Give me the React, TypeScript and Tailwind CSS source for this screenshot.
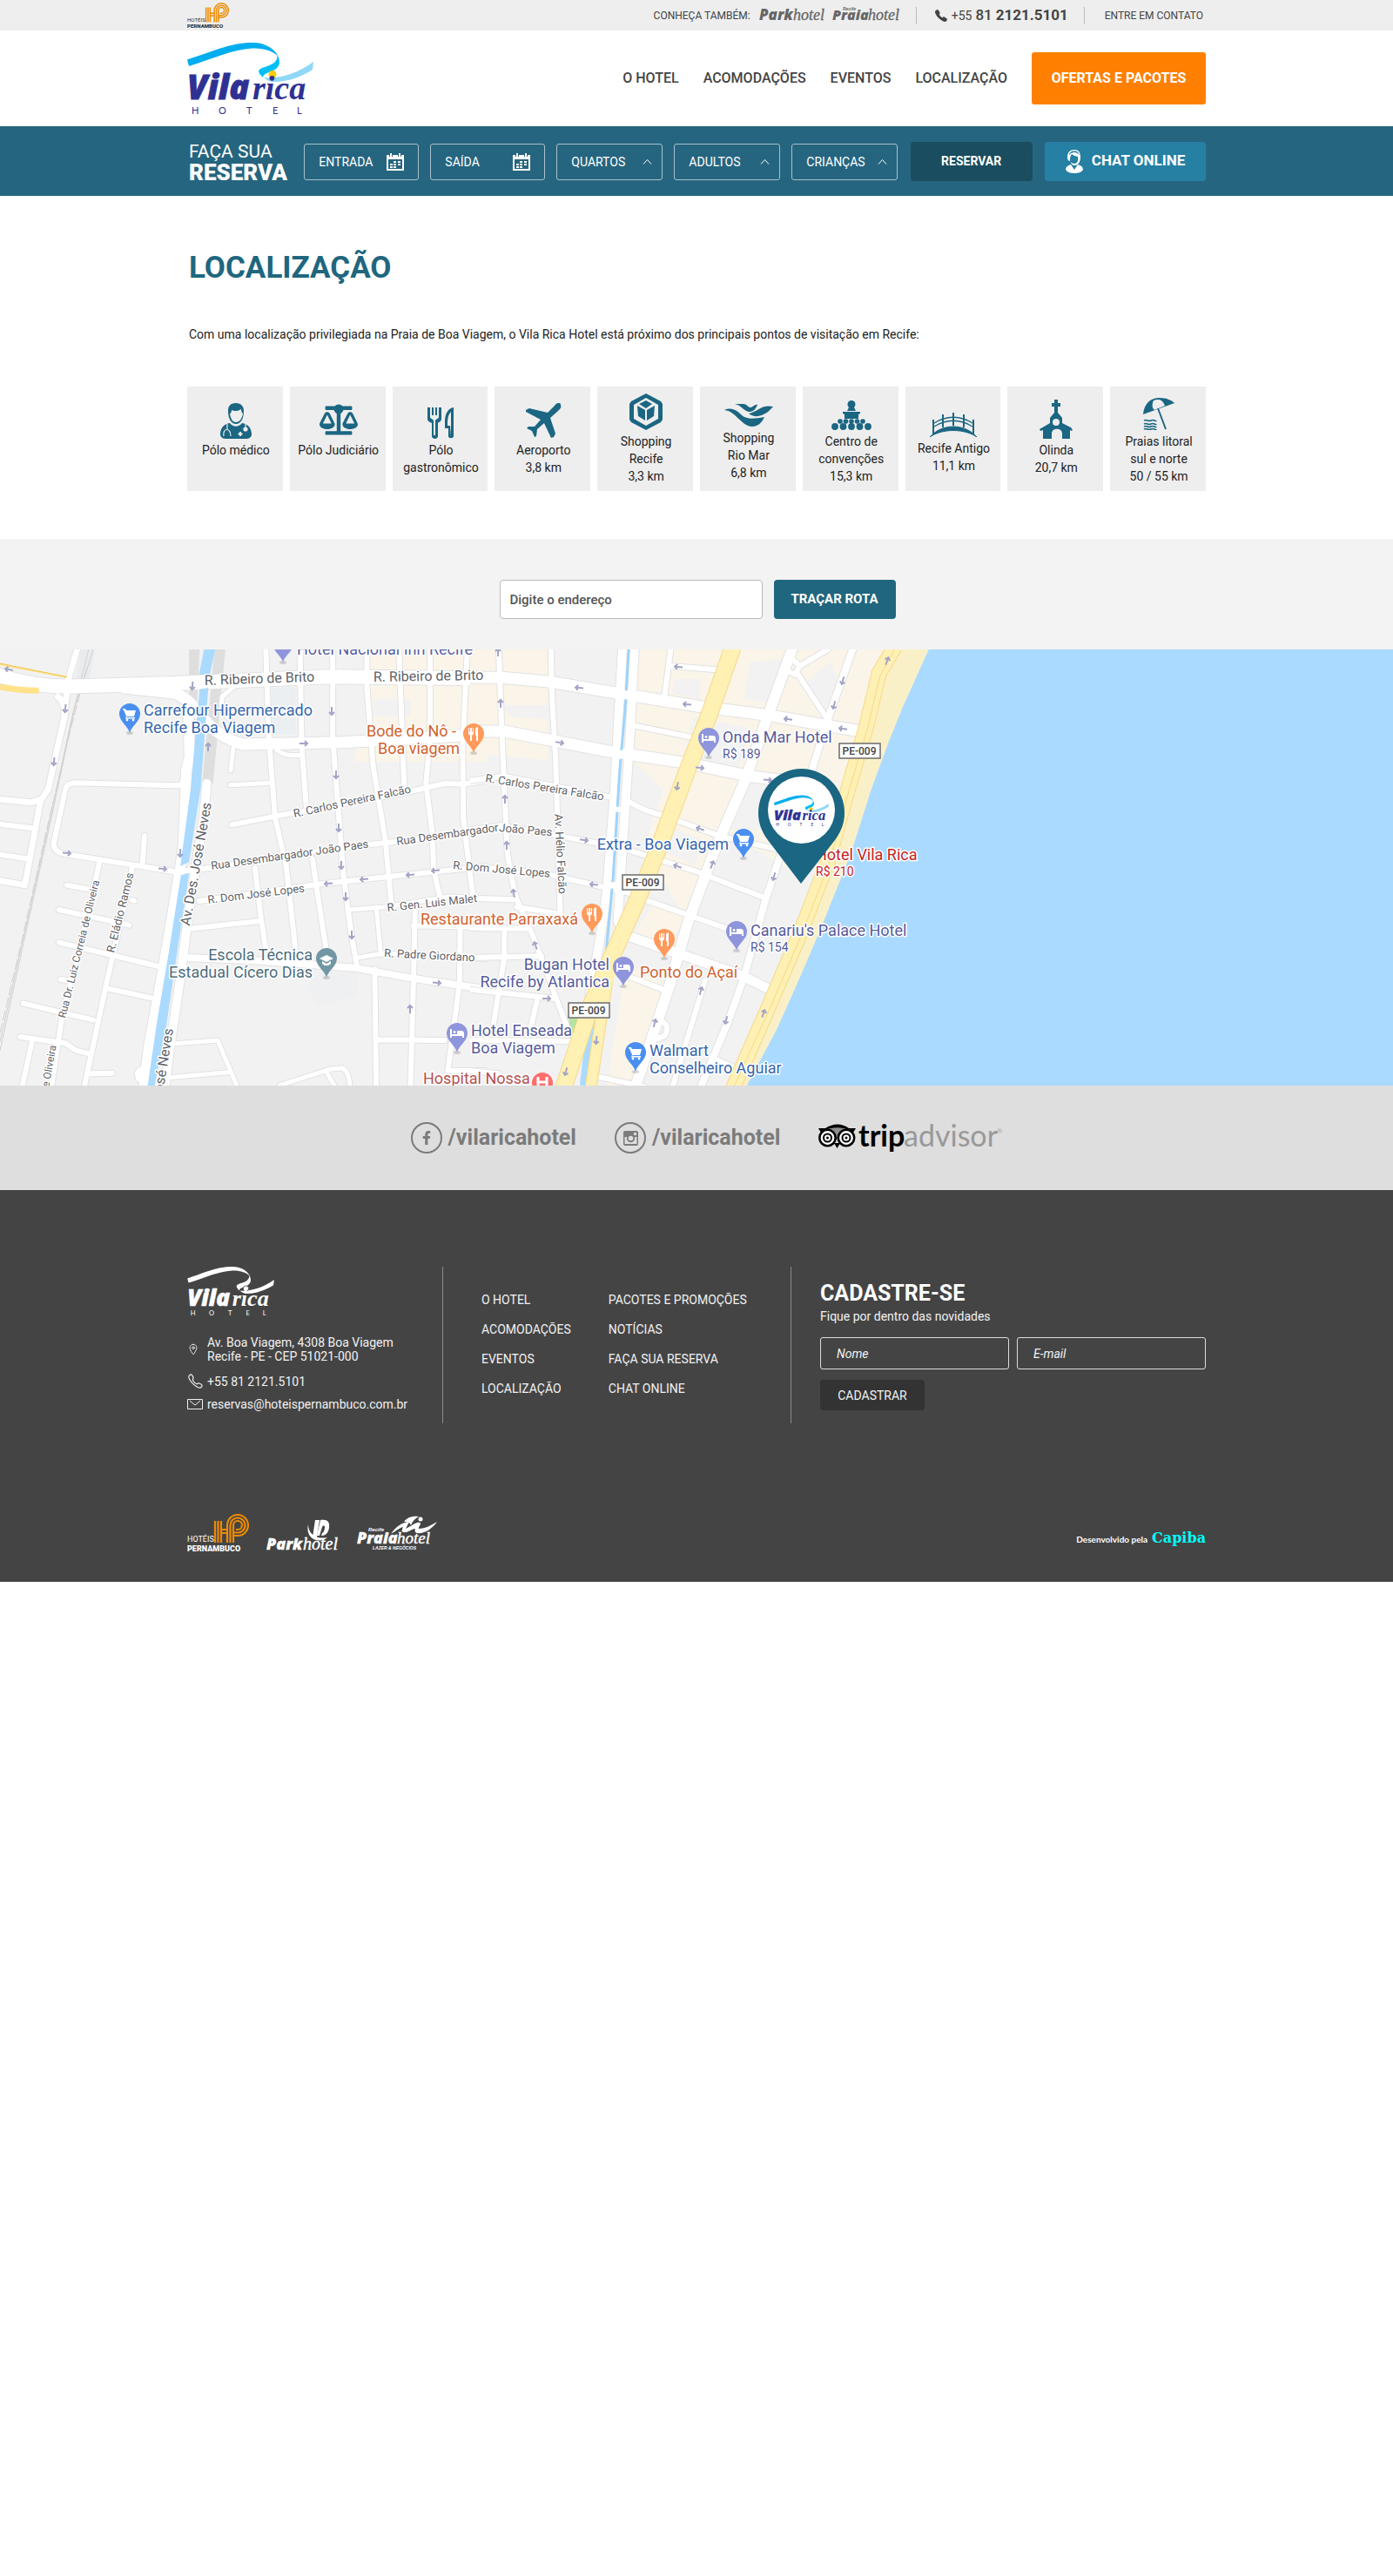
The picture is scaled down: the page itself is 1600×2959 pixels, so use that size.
import React from "react";
import { FaBalanceScale, FaFacebookF } from "react-icons/fa";
import { IoCall, IoCallOutline, IoLocationOutline } from "react-icons/io5";

const HEAVY = "Open Sans, Liberation Sans, sans-serif";
const SANS = "Liberation Sans, Arial, sans-serif";
const SERIF = "Liberation Serif, Times New Roman, serif";
const BRAND = "#1b6682";

/* ---------- Logos ---------- */

type VilaProps = {
  width: number;
  height: number;
  x?: number;
  y?: number;
  white?: boolean;
};

function VilaRicaLogo({ width, height, x, y, white }: VilaProps) {
  const ink = white ? "#fff" : "#2e3192";
  return (
    <svg x={x} y={y} width={width} height={height} viewBox="0 0 145 83" role="img" aria-label="Vila Rica Hotel">
      <path d="M0 19.500C28 11 48 0 75 0c16 0 26 8 29 15-6-5-15-9-29-8.500C51 8 28 19 2 27Z" fill={white ? "#fff" : "#00aeef"} />
      <path d="M103 13c5 9 4 15-4 19-7 3-12 4-12 8-4-4-6-7-4-9 3-3 12-4 17-8 3-3 4-6 3-10Z" fill={white ? "#fff" : "#00c0f7"} />
      <path d="M88 40c16 2 38-4 57-18l-1 9c-14 9-30 14-43 14-6 0-10-2-13-5Z" fill={white ? "#fff" : "#8fd8f8"} />
      <circle cx="98" cy="36.500" r="4.500" fill={white ? "#fff" : "#ffcb05"} stroke={white ? "#444" : "none"} />
      <text x="0" y="65" fontFamily={HEAVY} fontWeight="800" fontStyle="italic" fontSize="38" fill={ink} stroke={ink} strokeWidth="0.800">
        Vila
      </text>
      <text x="75" y="65" fontFamily={SERIF} fontWeight="700" fontStyle="italic" fontSize="38" fill={ink}>
        rica
      </text>
      {["H", "O", "T", "E", "L"].map((c, i) => (
        <text key={c} x={[5, 36, 68, 98, 126][i]} y="82" fontFamily="Lato, sans-serif" fontSize="11" fill={ink}>
          {c}
        </text>
      ))}
    </svg>
  );
}

function PernambucoLogo({ width, height, ink }: { width: number; height: number; ink: string }) {
  return (
    <svg width={width} height={height} viewBox="0 0 71 44" role="img" aria-label="Hotéis Pernambuco">
      <g fill="none" stroke="#ee8a00" strokeWidth="2.200">
        <path d="M32 8v25M35.500 8v25M39 8v25M39 18h7M39 22h7" />
        <path d="M46 33V13a12 12 0 1 1 12 12h-5M49.500 33V13a8.500 8.500 0 1 1 8.500 8.500h-4M53 33V13a5 5 0 1 1 5 5h-2" />
      </g>
      <text x="0" y="32" fontFamily="Roboto, sans-serif" fontSize="9" fill={ink}>HOTÉIS</text>
      <text x="0" y="43" fontFamily="Roboto, sans-serif" fontWeight="900" fontSize="9" fill={ink}>PERNAMBUCO</text>
    </svg>
  );
}

function ParkHotelSmall() {
  return (
    <svg width="76" height="20" viewBox="0 0 76 20" role="img" aria-label="Park Hotel">
      <text x="0" y="15" fontFamily={HEAVY} fontWeight="800" fontStyle="italic" fontSize="17" fill="#666">Park</text>
      <text x="39" y="15" fontFamily={SERIF} fontStyle="italic" fontSize="18" fill="#666" stroke="#666" strokeWidth="0.300">hotel</text>
    </svg>
  );
}

function PraiaHotelSmall() {
  return (
    <svg width="78" height="20" viewBox="0 0 78 20" role="img" aria-label="Recife Praia Hotel">
      <text x="0" y="15" fontFamily={HEAVY} fontWeight="800" fontStyle="italic" fontSize="16" fill="#666">Praia</text>
      <text x="41" y="15" fontFamily={SERIF} fontStyle="italic" fontSize="18" fill="#666" stroke="#666" strokeWidth="0.300">hotel</text>
      <text x="12" y="4" fontFamily={SANS} fontWeight="700" fontStyle="italic" fontSize="5" fill="#666">Recife</text>
    </svg>
  );
}

function ParkHotelLogo() {
  return (
    <svg width="84" height="40" viewBox="0 0 84 40" role="img" aria-label="Park Hotel" fill="#fff">
      <path d="M56 3h5l-3 20h-5Z" />
      <path d="M62 3c8-1 11 2 10 9-1 6-4 9-9 9l1-3c2-1 3-4 3-7 0-2-2-2-3 0l-3 10h-3Z" />
      <path d="M48 8c-2 8 1 16 9 18 5 1 10 0 13-3-5 1-11 1-15-2-5-3-7-8-7-13Z" />
      <text x="0" y="37" fontFamily={HEAVY} fontWeight="800" fontStyle="italic" fontSize="18" stroke="#fff" strokeWidth="0.300">Park</text>
      <text x="42" y="37" fontFamily={SERIF} fontStyle="italic" fontSize="20" stroke="#fff" strokeWidth="0.400">hotel</text>
    </svg>
  );
}

function PraiaHotelLogo() {
  return (
    <svg width="94" height="42" viewBox="0 0 94 42" role="img" aria-label="Recife Praia Hotel Lazer e Negócios" fill="#fff">
      <path d="M39 21C46 11 52 8 60 7l-4 8c7-3 12-8 16-7 3 1-2 5-1 7 6 0 13-3 21-8-7 10-16 14-23 13-4-1-1-5-3-5-4 1-8 5-13 4-3-1 0-5 0-6-4 1-9 5-14 8Z" />
      <path d="M54 7c4-5 9-7 17-6-4 2-7 5-9 10-1-3-4-4-8-4Z" />
      <circle cx="73" cy="4" r="2.500" />
      <text x="0" y="32" fontFamily={HEAVY} fontWeight="800" fontStyle="italic" fontSize="18" stroke="#fff" strokeWidth="0.300">Praia</text>
      <text x="46" y="32" fontFamily={SERIF} fontStyle="italic" fontSize="19" stroke="#fff" strokeWidth="0.400">hotel</text>
      <text x="13" y="18" fontFamily={SANS} fontWeight="700" fontStyle="italic" fontSize="6">Recife</text>
      <text x="18" y="39" fontFamily={SANS} fontWeight="700" fontStyle="italic" fontSize="5">LAZER &amp; NEGÓCIOS</text>
    </svg>
  );
}

function TripAdvisorLogo() {
  return (
    <svg width="212" height="40" viewBox="0 0 212 40" role="img" aria-label="TripAdvisor">
      <path d="M7 7c10-6 20-6 29 0l-7 4-7 8-7-8Z" fill="#8e8e8e" />
      <path d="M0 5h8c9-6 19-6 27 0h8l-3 5-3-2C28 3 15 3 6 8l-3 2Z" fill="#000" />
      <circle cx="10.500" cy="16" r="9.200" fill="#fff" stroke="#000" strokeWidth="2.600" />
      <circle cx="32" cy="16" r="9.200" fill="#fff" stroke="#000" strokeWidth="2.600" />
      <g fill="#fff" stroke="#000" strokeWidth="2">
        <circle cx="10.500" cy="16" r="4.500" />
        <circle cx="32" cy="16" r="4.500" />
      </g>
      <circle cx="10.500" cy="16" r="1.500" fill="#000" />
      <circle cx="32" cy="16" r="1.500" fill="#000" />
      <path d="M18 22h7l-3.500 6Z" fill="#000" />
      <text x="46" y="26" fontFamily="Lato, sans-serif" fontWeight="700" fontSize="34" fill="#000">trip</text>
      <text x="98" y="26" fontFamily="Lato, sans-serif" fontSize="34" fill="#999">advisor</text>
      <text x="205" y="11" fontFamily="Lato, sans-serif" fontSize="8" fill="#aaa">®</text>
    </svg>
  );
}

/* ---------- Small icons ---------- */

function CalendarIcon() {
  return (
    <svg width="20" height="20" viewBox="0 0 20 20" className="shrink-0" aria-hidden="true">
      <path d="M0 2h20v18H0ZM2 7v11h16V7Z" fill="#fff" fillRule="evenodd" />
      <path d="M5 0v4M15 0v4" stroke="#26657f" strokeWidth="4" />
      <path d="M5 0v4M15 0v4" stroke="#fff" strokeWidth="2" />
      <path d="M8 9h3v2H8ZM13 9h3v2h-3ZM4 12h3v2H4ZM8 12h3v2H8ZM13 12h3v2h-3ZM4 15h3v2H4ZM8 15h3v2H8Z" fill="#fff" />
    </svg>
  );
}

function Caret() {
  return (
    <svg width="11" height="7" viewBox="0 0 11 7" aria-hidden="true" className="pointer-events-none absolute right-3 top-1/2 -translate-y-1/2">
      <path d="M1 6l4.500-5L10 6" fill="none" stroke="#fff" strokeWidth="1" />
    </svg>
  );
}

function AgentIcon() {
  return (
    <svg width="20" height="27" viewBox="0 0 20 27" fill="#fff" aria-hidden="true">
      <path d="M10 0C4 0 2 4 2 9c0 3 2 4 3 4 0-3 0-6 2-8 2 2 5 2 7 3 1 5-1 8-4 8-2 0-3-1-4-2 0 2 2 4 4 4 5 0 7-5 7-9 0-6-2-9-7-9Zm0 1.500c4 0 5 2 6 5-2-4-9-5-12 0 0-3 2-5 6-5Z" fillRule="evenodd" />
      <path d="M6 17l4 6 4-6c4 1 6 3 6 6-2 3-6 4-10 4s-8-1-10-4c0-3 2-5 6-6Z" />
    </svg>
  );
}

function InstagramIcon() {
  return (
    <svg width="17" height="17" viewBox="0 0 17 17" aria-hidden="true">
      <path d="M2 0h13a2 2 0 0 1 2 2v13a2 2 0 0 1-2 2H2a2 2 0 0 1-2-2V2a2 2 0 0 1 2-2ZM1.500 7v8h14V7h-2.600a4.700 4.700 0 1 1-8.800 0ZM12 2v3h3V2Z" fill="#7b7b7b" fillRule="evenodd" />
      <circle cx="8.500" cy="8.500" r="2.800" fill="#dedede" />
    </svg>
  );
}

/* ---------- Attractions ---------- */

const DoctorIcon = (
  <svg width="36" height="41" viewBox="0 0 36 41" fill={BRAND} aria-hidden="true">
    <path d="M18 0c-7 0-9 4-9 9 0 8 3 15 9 15s9-7 9-15c0-5-3-9-9-9Zm-7 12c1 0 2-2 2-4 4 2 8 1 11-1 0 3 1 4 2 5-1 6-4 10-8 10s-6-4-7-10Z" fillRule="evenodd" />
    <path d="M11 23c4 5 10 5 14 0 7 1 11 6 11 13 0 3-3 5-6 5H6c-3 0-6-2-6-5 0-7 4-12 11-13Z" />
    <g fill="none" stroke="#eee" strokeWidth="1.200">
      <path d="M8 24v6M4 38c-2-9 8-11 8 0" />
      <path d="M29 24v4" />
    </g>
    <circle cx="29" cy="30" r="2.600" fill="#eee" />
    <path d="M23 33v5M20.500 35.500h5" stroke="#eee" strokeWidth="2" />
  </svg>
);

const CutleryIcon = (
  <svg width="30" height="36" viewBox="0 0 30 36" fill={BRAND} aria-hidden="true">
    <path d="M0 0h3v11c0 2 3 2 4 4v17h2V15c1-2 4-2 4-4V0h3v13c0 3-3 4-4 5v15c0 4-7 4-7 0V18c-2-1-5-2-5-5Z" />
    <path d="M5 0h2v9H5ZM9 0h2v9H9Z" />
    <path d="M30 0v33c0 3-6 3-6 0v-9h-4V14c1-8 4-13 10-14Zm-3 5c-3 3-4 7-4 16h3l1 12Z" fillRule="evenodd" />
  </svg>
);

const PlaneIcon = (
  <svg width="42" height="41" viewBox="0 0 42 41" fill={BRAND} aria-hidden="true">
    <path d="M41 1c-2-2-5-1-7 2l-8 8L5 6 1 8v2l17 9-7 8H4l-2 2 6 3 3 7 2-1 1-8 8-7 8 17 3-1 2-4-6-18 9-8c3-3 4-4 3-6Z" />
  </svg>
);

const CubeIcon = (
  <svg width="38" height="42" viewBox="0 0 38 42" fill={BRAND} aria-hidden="true">
    <path d="M19 0l17 9 2 3v18l-2 3-17 9-17-9-2-3V12l2-3Zm0 5L5 13v16l14 8 14-8V13Z" fillRule="evenodd" />
    <path d="M19 8l7 4-7 5-8-5ZM9 14l9 5v12l-8-5ZM29 14l-9 5v12l8-5Z" />
  </svg>
);

const GullIcon = (
  <svg width="56" height="26" viewBox="0 0 56 26" fill={BRAND} aria-hidden="true">
    <path d="M0 7c9-4 15 1 20 6 6 5 14 4 26 2-3 7-8 11-14 11C20 26 13 8 0 7Z" />
    <path d="M12 0h10c4 0 5 4 8 4 3 0 5-4 8-3-2 5-5 8-9 8-6 0-10-8-17-9Z" />
    <path d="M56 3C43 0 38 9 28 11c5 4 11 4 17 1 5-2 8-6 11-9Z" />
  </svg>
);

const CrowdIcon = (
  <svg width="46" height="34" viewBox="0 0 46 34" fill={BRAND} aria-hidden="true">
    <circle cx="23" cy="4.500" r="4.500" />
    <path d="M18 12l2-4h6l2 4ZM13 13h20v2l-2 1v5H15v-5l-2-1Z" />
    {[10, 16.5, 23, 29.5, 36].map((x) => (
      <circle key={x} cx={x} cy="24" r="2.800" />
    ))}
    {[4, 13.5, 23, 32.5, 42].map((x) => (
      <ellipse key={x} cx={x} cy="30" rx="3.900" ry="4" />
    ))}
  </svg>
);

const BridgeIcon = (
  <svg width="54" height="28" viewBox="0 0 54 28" fill={BRAND} aria-hidden="true">
    <path d="M0 28c14-16 40-16 54 0C40 18 14 18 0 28Z" stroke={BRAND} strokeWidth="1" />
    <g fill="none" stroke={BRAND}>
      <path d="M4 8v17M15 2v15M27 0v15M39 2v15M50 8v17" strokeWidth="2" />
      <path d="M5 12c14-9 30-9 44 0M5 16c14-9 30-9 44 0" strokeWidth="1.300" />
    </g>
  </svg>
);

const ChurchIcon = (
  <svg width="38" height="45" viewBox="0 0 38 45" fill={BRAND} aria-hidden="true">
    <path d="M17 0h4v4h3v4h-3v7l5 6v6l10 5 2 3-1 1-2-1v10h-9v-6c0-7-12-7-12 0v6H4V35l-3 1-1-2 12-7v-6l5-6V8h-3V4h3Zm2 22a4 4 0 1 0 0 8 4 4 0 0 0 0-8Z" fillRule="evenodd" />
  </svg>
);

const UmbrellaIcon = (
  <svg width="38" height="37" viewBox="0 0 38 37" aria-hidden="true">
    <path d="M1 19C2 7 9 0 20 0c8 0 14 3 17 6L1 19Z" fill={BRAND} />
    <path d="M13 3c5-2 10-2 13 6l-12 5c-3-2-3-7-1-11Z" fill="#eee" />
    <path d="M18 12l9 24" stroke={BRAND} strokeWidth="2" />
    <path d="M2 26q2-1 4 0t4 0 4 0 2 0M2 30q2-1 4 0t4 0 4 0 2 0M2 33q2-1 4 0t4 0 4 0 2 0M2 36q2-1 4 0t4 0 4 0 2 0" fill="none" stroke={BRAND} strokeWidth="1.600" />
  </svg>
);

type Attraction = { lines: string[]; icon: React.ReactNode; box: string };

const ATTRACTIONS: Attraction[] = [
  { lines: ["Pólo médico"], icon: DoctorIcon, box: "h-[63px]" },
  { lines: ["Pólo Judiciário"], icon: <FaBalanceScale size={44} color={BRAND} aria-hidden="true" />, box: "h-[63px]" },
  { lines: ["Pólo", "gastronômico"], icon: CutleryIcon, box: "h-[63px]" },
  { lines: ["Aeroporto", "3,8 km"], icon: PlaneIcon, box: "h-[63px]" },
  { lines: ["Shopping", "Recife", "3,3 km"], icon: CubeIcon, box: "h-[53px]" },
  { lines: ["Shopping", "Rio Mar", "6,8 km"], icon: GullIcon, box: "h-[49px]" },
  { lines: ["Centro de", "convenções", "15,3 km"], icon: CrowdIcon, box: "h-[53px]" },
  { lines: ["Recife Antigo", "11,1 km"], icon: BridgeIcon, box: "h-[61px]" },
  { lines: ["Olinda", "20,7 km"], icon: ChurchIcon, box: "h-[63px]" },
  { lines: ["Praias litoral", "sul e norte", "50 / 55 km"], icon: UmbrellaIcon, box: "h-[53px]" },
];

/* ---------- Map ---------- */

type Road = [string, number];

const WEST_ROADS: Road[] = [
  ["M248 18L220 120 205 260 155 500 130 540 80 830 0 815M0 535L100 545 130 535M185 180Q212 200 208 250", 7],
  ["M0 620L115 635M0 725L95 740", 6],
  ["M600 450L580 487 560 487 240 478Q215 480 210 500L172 690Q175 715 205 722L570 785", 6],
  ["M605 200L610 390 600 430 590 700 560 900 520 1150 480 1380 462 1530", 12],
  ["M665 480L655 600 610 900 580 1150 545 1400 530 1530", 10],
  ["M560 785L680 770 1100 700 1240 685 1568 640", 6],
  ["M640 885L1040 825 1568 765M745 622L900 590 1310 510 1430 480 1490 482 1568 468", 6],
  ["M610 980L830 955M215 830L300 848M190 915L415 968M190 1028L510 1110M195 1155L215 1158M425 882L432 884M340 1185L490 1220M75 1238L300 1295M65 1353L210 1375 245 1400 290 1412M105 1360L70 1530M290 1480L360 1478M465 660L458 760", 6],
  ["M595 1080L820 1090 1140 1115 1320 1150 1568 1190", 8],
  ["M320 750L290 900 200 1280 165 1530M425 770L400 900 340 1180 270 1530", 6],
  ["M550 1378L700 1365 765 1530M530 1495L735 1475M900 1520L1060 1465 1100 1460Q1122 1470 1125 1520M1050 1475L1075 1520M440 1480Q450 1455 460 1470L445 1500Z", 5],
  ["M855 18L865 330 885 600 920 760 950 1050M965 18L970 350 985 560M1283 18L1300 490M1005 740L1020 850 1050 1060M820 770L840 950 855 1050", 6],
  ["M1070 18L1070 320 1090 600 1105 800 1130 1000 1148 1110M1180 18V150L1200 420 1240 680 1258 890M1383 18V330L1370 480 1390 650 1395 780 1415 870M1503 18L1488 350 1490 600 1520 860", 6],
  ["M750 360L742 435M740 485L870 478M890 365Q920 388 970 382M1125 915L1245 905 1440 870 1568 875M1210 905L1225 1070M1150 1080L1235 1065 1568 1085M760 140L715 180Q705 230 740 260", 5],
  ["M1330 970L1568 975M1335 920L1330 1150 1320 1530M1480 980L1478 1170 1440 1470H1568M1205 1120L1210 1530M1210 1363L1430 1365", 6],
  ["M400 150L560 168Q600 180 640 240 700 320 780 345L1100 338 1568 310", 13],
  ["M0 108Q120 150 250 145L560 135 1060 112 1568 118", 16],
];

const EAST_ROADS: Road[] = [
  ["M645 18L625 180M645 75L795 88M92 18L100 250 110 500 120 720Q130 800 150 880L200 1000 270 1200 315 1330M260 18L262 150 275 400 290 930", 6],
  ["M1150 18L1060 75 1035 50M1060 75L1045 105 1020 90M1055 105L1150 260M525 280L710 320M515 545Q560 575 620 590L800 660 1000 710", 6],
  ["M0 470L110 455 420 520 470 530M0 640L100 625 260 655 430 690 510 710 720 780 950 875M0 765L240 790 400 830 520 860 560 880 720 940 880 1000", 6],
  ["M510 1145L620 1190M0 875L140 880M150 905L290 930M0 978L190 980M110 980V1080L75 1310M0 1080L230 1075M0 1190L270 1220M215 1230L195 1320M0 1365L330 1368M600 1290Q650 1310 625 1350L600 1360M0 1470L90 1480M790 1430L850 1460", 6],
  ["M755 1160L650 1530M410 1490L560 1525", 6],
  ["M1230 18L1150 260 1100 430 1000 720 950 880 880 1150 830 1300 740 1530", 8],
  ["M520 1010L680 1070 870 1140 965 1190", 11],
  ["M1035 18L960 240 880 480 790 700 700 960 640 1180 530 1530", 12],
  ["M490 18L480 200 465 500 440 850 420 1000 385 1210M528 18L515 300 490 700 475 950Q480 980 510 1005", 10],
  ["M0 115H100L260 130 480 170 740 215 960 245 1255 300M0 300H110L450 370 700 410 900 455 1050 475", 13],
];

function RoadLayer({ roads }: { roads: Road[] }) {
  return (
    <g fill="none" strokeLinecap="round" strokeLinejoin="round">
      {roads.map(([d, w], i) => (
        <path key={i} d={d} stroke="#e2e2e4" strokeWidth={w + 2} vectorEffect="non-scaling-stroke" />
      ))}
      {roads.map(([d, w], i) => (
        <path key={i} d={d} stroke="#fff" strokeWidth={w} vectorEffect="non-scaling-stroke" />
      ))}
    </g>
  );
}

function Avenue({ d, w }: { d: string; w: number }) {
  return (
    <g fill="none">
      <path d={d} stroke="#f6d98a" strokeWidth={w + 2} vectorEffect="non-scaling-stroke" />
      <path d={d} stroke="#fff0b3" strokeWidth={w} vectorEffect="non-scaling-stroke" />
    </g>
  );
}

/* one-way arrows: x, y, heading in degrees (0 points right) */
const ARROWS: [number, number, number][] = [
  [10, 23, 190], [75, 68, 95], [62, 129, 95], [221, 42, 95], [239, 112, 270], [349, 108, 0], [381, 71, 90],
  [386, 144, 90], [389, 205, 90], [392, 248, 90], [397, 284, 90], [404, 328, 90], [377, 269, 175], [418, 264, 175],
  [471, 259, 175], [500, 254, 175], [77, 234, 5], [187, 252, 5], [207, 234, 92], [502, 383, 5], [471, 413, 270],
  [572, 3, 270], [575, 62, 270], [665, 44, 185], [643, 107, 10], [580, 172, 270], [582, 225, 270], [590, 280, 260],
  [671, 219, 8], [682, 270, 185], [615, 340, 250], [628, 401, 0], [779, 20, 185], [789, 63, 185], [905, 80, 188],
  [968, 91, 188], [968, 36, 105], [958, 64, 105], [1019, 13, 290], [778, 157, 100], [804, 136, 5], [882, 150, 5],
  [804, 206, 200], [818, 247, 290], [778, 249, 200], [889, 261, 105], [805, 392, 285], [752, 429, 285],
  [834, 426, 105], [877, 418, 290], [685, 449, 95], [650, 485, 105],
];

type Place = {
  x: number;
  y: number;
  lines: string[];
  color: string;
  anchor?: "start" | "end";
  price?: string;
};

const PLACES: Place[] = [
  { x: 341, y: 6, lines: ["Hotel Nacional Inn Recife"], color: "#5b5f9f" },
  { x: 165, y: 76, lines: ["Carrefour Hipermercado", "Recife Boa Viagem"], color: "#3566ad" },
  { x: 524, y: 100, lines: ["Bode do Nô -"], color: "#d0622f", anchor: "end" },
  { x: 528, y: 120, lines: ["Boa viagem"], color: "#d0622f", anchor: "end" },
  { x: 359, y: 357, lines: ["Escola Técnica", "Estadual Cícero Dias"], color: "#4c6d7b", anchor: "end" },
  { x: 664, y: 316, lines: ["Restaurante Parraxaxá"], color: "#d0622f", anchor: "end" },
  { x: 700, y: 368, lines: ["Bugan Hotel", "Recife by Atlantica"], color: "#565b9c", anchor: "end" },
  { x: 541, y: 444, lines: ["Hotel Enseada", "Boa Viagem"], color: "#565b9c" },
  { x: 486, y: 499, lines: ["Hospital Nossa"], color: "#b5504f" },
  { x: 735, y: 377, lines: ["Ponto do Açaí"], color: "#d0622f" },
  { x: 746, y: 467, lines: ["Walmart", "Conselheiro Aguiar"], color: "#3566ad" },
  { x: 837, y: 230, lines: ["Extra - Boa Viagem"], color: "#3566ad", anchor: "end" },
  { x: 830, y: 107, lines: ["Onda Mar Hotel"], color: "#565b9c", price: "R$ 189" },
  { x: 862, y: 329, lines: ["Canariu's Palace Hotel"], color: "#565b9c", price: "R$ 154" },
  { x: 937, y: 242, lines: ["Hotel Vila Rica"], color: "#c5221f", price: "R$ 210" },
];

const STREETS: { x: number; y: number; r: number; size: number; text: string }[] = [
  { x: 235, y: 41, r: -2, size: 16, text: "R. Ribeiro de Brito" },
  { x: 429, y: 37, r: -1, size: 16, text: "R. Ribeiro de Brito" },
  { x: 338, y: 193, r: -12, size: 13, text: "R. Carlos Pereira Falcão" },
  { x: 557, y: 152, r: 9, size: 13, text: "R. Carlos Pereira Falcão" },
  { x: 243, y: 253, r: -8, size: 13, text: "Rua Desembargador João Paes" },
  { x: 456, y: 225, r: -8, size: 13, text: "Rua Desembargador" },
  { x: 573, y: 209, r: 5, size: 13, text: "João Paes" },
  { x: 239, y: 292, r: -7, size: 13, text: "R. Dom José Lopes" },
  { x: 520, y: 252, r: 5, size: 13, text: "R. Dom José Lopes" },
  { x: 445, y: 301, r: -6, size: 13, text: "R. Gen. Luis Malet" },
  { x: 441, y: 353, r: 3, size: 13, text: "R. Padre Giordano" },
  { x: 637, y: 189, r: 87, size: 13, text: "Av. Hélio Falcão" },
  { x: 218, y: 318, r: -80, size: 16, text: "Av. Des. José Neves" },
  { x: 186, y: 518, r: -81, size: 16, text: "José Neves" },
  { x: 75, y: 424, r: -76, size: 12, text: "Rua Dr. Luiz Correia de Oliveira" },
  { x: 131, y: 349, r: -76, size: 13, text: "R. Eládio Ramos" },
  { x: 55, y: 510, r: -80, size: 12, text: "de Oliveira" },
];

const PINS: { x: number; y: number; color: string; kind: "cart" | "food" | "bed" | "school" | "hospital" }[] = [
  { x: 149, y: 96, color: "#4a8ff0", kind: "cart" },
  { x: 544, y: 119, color: "#ff9a5c", kind: "food" },
  { x: 375, y: 377, color: "#7197a5", kind: "school" },
  { x: 325, y: 15, color: "#8f95dc", kind: "bed" },
  { x: 525, y: 463, color: "#8f95dc", kind: "bed" },
  { x: 680, y: 326, color: "#ff9a5c", kind: "food" },
  { x: 716, y: 387, color: "#8f95dc", kind: "bed" },
  { x: 763, y: 355, color: "#ff9a5c", kind: "food" },
  { x: 854, y: 240, color: "#4a8ff0", kind: "cart" },
  { x: 814, y: 124, color: "#8f95dc", kind: "bed" },
  { x: 846, y: 346, color: "#8f95dc", kind: "bed" },
  { x: 730, y: 485, color: "#4a8ff0", kind: "cart" },
  { x: 623, y: 520, color: "#ff6e6e", kind: "hospital" },
];

function PinGlyph({ kind }: { kind: string }) {
  if (kind === "cart")
    return (
      <g fill="#fff">
        <path d="M-8-28h3l1 2h11l-2 7H-3l-1 1H6v1.500H-5l1-3-3-7h-1Z" />
        <circle cx="-3" cy="-15" r="1.400" />
        <circle cx="4" cy="-15" r="1.400" />
      </g>
    );
  if (kind === "food")
    return (
      <g fill="#fff">
        <path d="M-6-29v6c0 2 2 2 2 3v6h2v-6c0-1 2-1 2-3v-6h-1v5h-1v-5h-2v5h-1v-5Z" />
        <path d="M2-27c0-2 2-3 3-3v16H3v-6H2Z" />
      </g>
    );
  if (kind === "school")
    return <path d="M-8-22l8-4 8 4-8 4ZM-5-19l5 3 5-3v3c-3 3-7 3-10 0Z" fill="#fff" />;
  if (kind === "hospital")
    return <path d="M-5-29v12M5-29v12M-5-23H5" stroke="#fff" strokeWidth="3" />;
  return <path d="M-8-27v10h2v-2H6v2h2v-4c0-3-1-4-3-4H0v4h-6v-6ZM-3-25a1.500 1.500 0 1 0 .1 0Z" fill="#fff" />;
}

function HotelMap() {
  return (
    <svg
      viewBox="0 0 1600 501"
      preserveAspectRatio="xMidYMid slice"
      className="block h-[501px] w-full"
      role="img"
      aria-label="Mapa da região de Boa Viagem, Recife"
      fontFamily="Roboto, sans-serif"
    >
      <rect width="1600" height="501" fill="#f2f2f2" />

      <svg x="0" y="0" width="560" height="501" viewBox="0 18 1568 1503" preserveAspectRatio="none">
        <path d="M1185 18H1568V405H1145V345H1200Z" fill="#faf5e8" />
        <path d="M1200 190H1320V250H1200Z" fill="#f2f2f2" />
        <path d="M875 150H950V310H875Z" fill="#ebeff2" />
        <path d="M990 1170L1040 1130 1150 1130V1210L1020 1250Z" fill="#eef0f2" />
        <path d="M260 18H305L285 130H240Z" fill="#e9ecee" />
        <path d="M608 18H642L625 395H608Z" fill="#dedede" />
        <path d="M690 18H725L685 480H650Z" fill="#dedede" />
        <g fill="none" stroke="#d0d0d0" strokeWidth="1">
          <path d="M300 18L240 220 165 600 90 960 0 1400" vectorEffect="non-scaling-stroke" />
          <path d="M280 80L225 300 150 640 75 1000 0 1340" vectorEffect="non-scaling-stroke" strokeDasharray="12 3" />
          <path d="M285 18L232 250 157 620 82 980 0 1370" vectorEffect="non-scaling-stroke" />
        </g>
        <RoadLayer roads={WEST_ROADS} />
        <path d="M656 18H692L675 105 640 105ZM642 155L670 150 645 500 608 750 580 765 613 500ZM582 795L608 790 560 1130 530 1350 497 1521H475L505 1300 540 1080Z" fill="#aadaff" />
        <g fill="none" stroke="#ffe28a">
          <path d="M0 70L215 113" strokeWidth="2" vectorEffect="non-scaling-stroke" />
          <path d="M0 147Q60 160 125 160" strokeWidth="7" vectorEffect="non-scaling-stroke" />
        </g>
        <path d="M0 66L215 113" fill="none" stroke="#f0c452" strokeWidth="1" vectorEffect="non-scaling-stroke" />
      </svg>

      <svg x="540" y="0" width="560" height="501" viewBox="0 18 1568 1503" preserveAspectRatio="none">
        <g fill="#faf5e8">
          <path d="M0 18H250V400L0 375Z" />
          <path d="M530 18H1390L1190 560 1060 800 830 650 700 960 560 700 620 500 520 400Z" />
          <path d="M500 1100L640 1180 540 1521H440Z" />
          <path d="M600 880L690 930 640 1060 530 990Z" />
        </g>
        <g fill="#f2f2f2">
          <path d="M100 210H260V260L130 250ZM660 120H740V190L650 170ZM900 60L1010 50 960 200 880 190ZM1080 130L1160 60 1190 150 1140 230ZM720 250L900 290 860 440 680 410ZM900 480L1000 490 960 640 840 640Z" />
          <path d="M620 620L760 680 720 760 590 700ZM740 800L930 880 860 1100 700 1050Z" />
        </g>
        <path d="M1380 18H1475L1390 220 1345 340 1290 500 1225 720 1165 880 1120 1000 1060 1150 985 1330 890 1521H850L1060 1000 1210 520 1310 100Z" fill="#faf0c8" />
        <path d="M1475 18H1568V1521H890L930 1440 985 1330 1060 1150 1120 1000 1165 880 1225 720 1290 500 1345 340 1390 220Z" fill="#aadaff" />
        <path d="M318 1290H350L330 1355H318Z" fill="#b5e3a1" />
        <RoadLayer roads={EAST_ROADS} />
        <path d="M510 18L500 200 480 450 460 800 435 1090" fill="none" stroke="#9fd3fb" strokeWidth="3" vectorEffect="non-scaling-stroke" />
        <path d="M485 160H520V190H485ZM465 365H510V395H465ZM450 560H490V578H450ZM440 820H480V842H440Z" fill="#fff" />
        <path d="M392 1280L365 1521" fill="none" stroke="#aadaff" strokeWidth="9" vectorEffect="non-scaling-stroke" />
        <Avenue d="M845 10L770 240 700 430 600 720 530 900 450 1090 390 1240 300 1530" w={18} />
        <Avenue d="M445 1130L420 1300 388 1530" w={12} />
        <path d="M455 1080L415 1230" fill="none" stroke="#fff0b3" strokeWidth="18" vectorEffect="non-scaling-stroke" />
        <Avenue d="M1365 10L1315 100 1275 280 1210 520 1150 750 1060 1000 960 1250 845 1530" w={16} />
        <path d="M1365 18L1318 110 1278 290 1213 525 1155 755 1066 1000 966 1250 850 1521" fill="none" stroke="#f6d98a" strokeWidth="1" vectorEffect="non-scaling-stroke" />
      </svg>

      <rect x="1099" y="0" width="501" height="501" fill="#aadaff" />

      <g fill="none" stroke="#a3a4c6" strokeWidth="2">
        {ARROWS.map(([x, y, r]) => (
          <path key={`${x}-${y}`} d="M-5 0H4M1-3L4 0 1 3" transform={`translate(${x} ${y}) rotate(${r})`} />
        ))}
      </g>

      <g stroke="#fff" strokeWidth="3" strokeLinejoin="round" paintOrder="stroke">
        {STREETS.map((s) => (
          <text key={`${s.x}-${s.y}`} fontSize={s.size} fill="#5f6368" transform={`translate(${s.x} ${s.y}) rotate(${s.r})`}>
            {s.text}
          </text>
        ))}
        {PLACES.map((p) => (
          <g key={p.lines[0]} fill={p.color} textAnchor={p.anchor ?? "start"}>
            {p.lines.map((l, i) => (
              <text key={l} x={p.x} y={p.y + i * 20} fontSize="18">
                {l}
              </text>
            ))}
            {p.price && (
              <text x={p.x} y={p.y + 18} fontSize="14">
                {p.price}
              </text>
            )}
          </g>
        ))}
      </g>

      {[
        [964, 108],
        [715, 259],
        [653, 406],
      ].map(([x, y]) => (
        <g key={x}>
          <rect x={x} y={y} width="47" height="17" fill="#fff" stroke="#6b6b6b" strokeWidth="1.500" />
          <text x={x + 23} y={y + 13} textAnchor="middle" fontSize="12" fontWeight="500" fill="#444">PE-009</text>
        </g>
      ))}

      {PINS.map((p) => (
        <g key={`${p.x}-${p.y}`} transform={`translate(${p.x} ${p.y})`}>
          <ellipse cx="0" cy="0" rx="4" ry="2" fill="#000" opacity="0.150" />
          <path d="M0 0C-1-7-12-13-12-22a12 12 0 1 1 24 0C12-13 1-7 0 0Z" fill={p.color} />
          <PinGlyph kind={p.kind} />
        </g>
      ))}

      <path d="M920 269L882 219C874 208 871 198 871 188a49.500 51 0 1 1 99 0c0 10-3 20-11 31Z" fill={BRAND} />
      <circle cx="920.500" cy="184.500" r="38.500" fill="#fff" />
      <VilaRicaLogo x={889} y={167} width={63} height={37} />
    </svg>
  );
}

/* ---------- Page sections ---------- */

const wrap = "mx-auto w-full max-w-[1170px]";

function DateField({ id, label }: { id: string; label: string }) {
  return (
    <label htmlFor={id} className="flex h-[42px] w-[132px] items-center rounded-[3px] border border-[#a8c1cc] px-4">
      <input id={id} type="text" aria-label={label} placeholder={label} className="w-0 min-w-0 flex-1 bg-transparent text-sm text-white outline-none placeholder:text-white" />
      <CalendarIcon />
    </label>
  );
}

function CountField({ label }: { label: string }) {
  return (
    <div className="relative h-[42px] w-[122px]">
      <select aria-label={label} className="h-full w-full appearance-none rounded-[3px] border border-[#a8c1cc] bg-transparent pl-4 pr-6 text-sm text-white">
        <option>{label}</option>
        <option>1</option>
        <option>2</option>
        <option>3</option>
      </select>
      <Caret />
    </div>
  );
}

function SocialLink({ children }: { children: React.ReactNode }) {
  return (
    <a href="#" className="flex items-center gap-[7px] text-[25px] font-bold leading-8 text-[#7b7b7b]">
      <span className="flex size-9 items-center justify-center rounded-full border-2 border-[#7b7b7b]">{children}</span>
      /vilaricahotel
    </a>
  );
}

const FOOTER_LINKS = [
  ["O HOTEL", "ACOMODAÇÕES", "EVENTOS", "LOCALIZAÇÃO"],
  ["PACOTES E PROMOÇÕES", "NOTÍCIAS", "FAÇA SUA RESERVA", "CHAT ONLINE"],
];

export default function App() {
  return (
    <div className="min-h-screen bg-white font-[Roboto,sans-serif] text-[#222]">
      <div className="bg-[#eee]">
        <div className={`${wrap} flex h-[35px] items-center justify-between`}>
          <a href="#"><PernambucoLogo width={48} height={30} ink="#333" /></a>
          <div className="flex items-center text-xs text-[#444]">
            <span>CONHEÇA TAMBÉM:</span>
            <a href="#" className="ml-2.5"><ParkHotelSmall /></a>
            <a href="#" className="ml-2"><PraiaHotelSmall /></a>
            <span className="ml-[18px] h-5 w-px bg-[#bbb]" />
            <a href="tel:+558121215101" className="ml-5 flex items-baseline leading-5">
              <IoCall size={16} aria-hidden="true" className="self-center" />
              <span className="ml-1 text-sm">+55</span>
              <span className="ml-1 text-[17px] font-medium">81</span>
              <span className="ml-1 text-[17px] font-bold">2121.5101</span>
            </a>
            <span className="ml-[18px] h-5 w-px bg-[#bbb]" />
            <a href="#" className="ml-[23px] mr-[3px]">ENTRE EM CONTATO</a>
          </div>
        </div>
      </div>

      <header className={`${wrap} flex h-[110px] items-center justify-between`}>
        <a href="#"><VilaRicaLogo width={145} height={83} /></a>
        <nav className="flex items-center gap-7 font-medium text-[#444]">
          <a href="#">O HOTEL</a>
          <a href="#">ACOMODAÇÕES</a>
          <a href="#">EVENTOS</a>
          <a href="#">LOCALIZAÇÃO</a>
          <a href="#" className="flex h-[60px] w-[200px] items-center justify-center rounded-[3px] bg-[#ff8000] font-bold text-white">OFERTAS E PACOTES</a>
        </nav>
      </header>

      <section className="bg-[#26657f] text-white">
        <form className={`${wrap} flex h-20 items-center justify-between`}>
          <h2 className="flex w-[120px] flex-col pl-0.5 pt-0.5">
            <span className="text-[21px] leading-6">FAÇA SUA</span>
            <strong className="text-[26px] font-black leading-6">RESERVA</strong>
          </h2>
          <div className="flex items-center gap-[13px] pt-px">
            <DateField id="entrada" label="ENTRADA" />
            <DateField id="saida" label="SAÍDA" />
            <CountField label="QUARTOS" />
            <CountField label="ADULTOS" />
            <CountField label="CRIANÇAS" />
          </div>
          <button type="submit" className="h-[45px] w-[140px] rounded-sm bg-[#194d5f] text-sm font-bold">RESERVAR</button>
          <button type="button" className="flex h-[45px] w-[185px] items-center justify-center gap-2.5 rounded-sm bg-[#2680a3] text-[17px] font-bold">
            <AgentIcon />
            CHAT ONLINE
          </button>
        </form>
      </section>

      <main>
        <section className={`${wrap} pb-[55px] pt-[63px]`}>
          <h1 className="pl-0.5 text-[35px] font-bold leading-10 text-[#20667f]">LOCALIZAÇÃO</h1>
          <p className="mt-[46px] pl-0.5 text-sm leading-5">
            Com uma localização privilegiada na Praia de Boa Viagem, o Vila Rica Hotel está próximo dos principais pontos de visitação em Recife:
          </p>
          <ul className="mt-[50px] grid grid-cols-10 gap-2">
            {ATTRACTIONS.map((a) => (
              <li key={a.lines.join(" ")} className="flex h-[120px] flex-col items-center bg-[#eee] pl-0.5 text-center text-sm leading-5">
                <span className={`${a.box} flex items-end justify-center pb-[3px]`}>{a.icon}</span>
                {a.lines.map((l) => (
                  <span key={l} className="whitespace-nowrap">{l}</span>
                ))}
              </li>
            ))}
          </ul>
        </section>

        <section className="bg-[#f3f3f3]">
          <form className="flex h-[127px] items-center justify-center gap-[13px] pl-0.5 pt-3">
            <input type="text" aria-label="Endereço" placeholder="Digite o endereço" className="h-[45px] w-[302px] rounded-sm border border-[#bbb] bg-white px-[11px] text-[15px] font-medium text-[#555] placeholder:text-[#555]" />
            <button type="submit" className="h-[45px] w-[140px] rounded-sm bg-[#20667f] text-[15px] font-bold text-white">TRAÇAR ROTA</button>
          </form>
        </section>

        <HotelMap />
      </main>

      <section className="bg-[#dedede]">
        <div className="flex h-[120px] items-center justify-center gap-11 pl-6">
          <SocialLink><FaFacebookF size={16} aria-hidden="true" /></SocialLink>
          <SocialLink><InstagramIcon /></SocialLink>
          <a href="#" className="pt-2"><TripAdvisorLogo /></a>
        </div>
      </section>

      <footer className="bg-[#444] text-sm text-[#f2f2f2]">
        <div className={`${wrap} pb-[34px] pt-[88px]`}>
          <div className="flex h-[180px]">
            <address className="flex w-[294px] flex-col border-r border-[#8a8a8a] not-italic leading-4">
              <VilaRicaLogo width={100} height={57} white />
              <p className="mt-[22px] flex items-center">
                <IoLocationOutline size={18} aria-hidden="true" className="mr-[9px] h-[18px] w-[14px] shrink-0" />
                <span>Av. Boa Viagem, 4308 Boa Viagem<br />Recife - PE - CEP 51021-000</span>
              </p>
              <a href="tel:+558121215101" className="mt-[11px] flex items-center">
                <IoCallOutline size={19} aria-hidden="true" className="mr-1" />
                +55 81 2121.5101
              </a>
              <a href="mailto:reservas@hoteispernambuco.com.br" className="mt-[9px] flex items-center">
                <svg width="18" height="12" viewBox="0 0 18 12" className="mr-[5px]" fill="none" stroke="#f2f2f2" aria-hidden="true">
                  <path d="M.500.500h17v11H.500ZM3 2l6 5 6-5" />
                </svg>
                reservas@hoteispernambuco.com.br
              </a>
            </address>
            <nav className="flex w-[400px] gap-[43px] border-r border-[#8a8a8a] pl-11 pt-7">
              {FOOTER_LINKS.map((col) => (
                <ul key={col[0]} className="flex flex-col gap-3.5 leading-5">
                  {col.map((l) => (
                    <li key={l}><a href="#">{l}</a></li>
                  ))}
                </ul>
              ))}
            </nav>
            <form className="flex flex-1 flex-col pl-[33px]">
              <h2 className="mt-[15px] text-[25px] font-bold leading-8 text-white">CADASTRE-SE</h2>
              <p className="leading-5">Fique por dentro das novidades</p>
              <div className="mt-3.5 flex gap-[9px]">
                <input type="text" aria-label="Nome" placeholder="Nome" className="h-[37px] min-w-0 flex-1 rounded-[3px] border border-[#ddd] bg-transparent px-[18px] italic placeholder:text-[#f2f2f2]" />
                <input type="email" aria-label="E-mail" placeholder="E-mail" className="h-[37px] min-w-0 flex-1 rounded-[3px] border border-[#ddd] bg-transparent px-[18px] italic placeholder:text-[#f2f2f2]" />
              </div>
              <button type="submit" className="mt-3 h-[35px] w-[120px] rounded-sm bg-[#333]">CADASTRAR</button>
            </form>
          </div>
          <div className="mt-[104px] flex items-end justify-between">
            <div className="flex items-end gap-5">
              <a href="#"><PernambucoLogo width={71} height={44} ink="#fff" /></a>
              <a href="#"><ParkHotelLogo /></a>
              <a href="#"><PraiaHotelLogo /></a>
            </div>
            <a href="#" className="mb-1 flex items-baseline gap-[5px] font-[Lato,sans-serif] text-[10px] font-bold text-white">
              Desenvolvido pela
              <span className="font-['DejaVu_Serif',serif] text-base leading-6 text-[#0ff]">Capiba</span>
            </a>
          </div>
        </div>
      </footer>
    </div>
  );
}
